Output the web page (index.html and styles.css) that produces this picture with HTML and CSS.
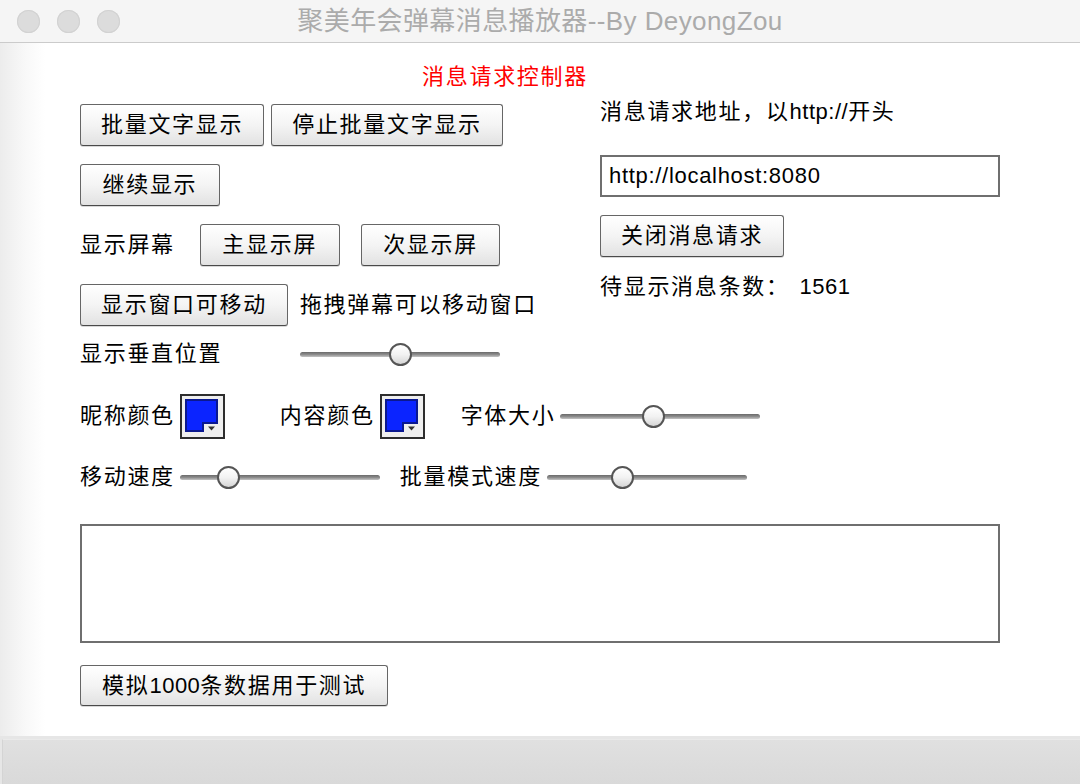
FILE: index.html
```html
<!DOCTYPE html>
<html lang="zh-CN">
<head>
<meta charset="utf-8">
<title>聚美年会弹幕消息播放器--By DeyongZou</title>
<link rel="stylesheet" href="styles.css">
</head>
<body>
<div class="window">
  <header class="titlebar">
    <div class="lights">
      <span class="light"></span>
      <span class="light"></span>
      <span class="light"></span>
    </div>
    <div class="title">聚美年会弹幕消息播放器<span class="title-lat">--By DeyongZou</span></div>
    <div class="title-spacer"></div>
  </header>

  <main class="content">
    <h1 class="heading">消息请求控制器</h1>

    <div class="top">
      <div class="left">
        <div class="row row-pair">
          <button class="btn">批量文字显示</button>
          <button class="btn">停止批量文字显示</button>
        </div>
        <div class="row">
          <button class="btn btn-short">继续显示</button>
        </div>
        <div class="row row-screen">
          <span class="label label-screen">显示屏幕</span>
          <button class="btn btn-short">主显示屏</button>
          <button class="btn btn-short">次显示屏</button>
        </div>
        <div class="row row-move">
          <button class="btn">显示窗口可移动</button>
          <span class="label">拖拽弹幕可以移动窗口</span>
        </div>
        <div class="row row-slim">
          <span class="label label-vpos">显示垂直位置</span>
          <input class="slider" type="range" min="0" max="100" value="50">
        </div>
      </div>

      <div class="right">
        <div class="label url-label">消息请求地址，以<span class="lat">http://</span>开头</div>
        <input class="url" type="text" value="http://localhost:8080">
        <button class="btn btn-close">关闭消息请求</button>
        <div class="count">
          <span class="label">待显示消息条数：</span>
          <span class="lat count-num">1561</span>
        </div>
      </div>
    </div>

    <div class="row row-colors">
      <div class="field">
        <span class="label">昵称颜色</span>
        <svg class="picker" viewBox="0 0 45 45" width="45" height="45">
          <rect x="1" y="1" width="43" height="43" fill="#eeeeee" stroke="#2d2d2d" stroke-width="2"/>
          <path d="M6 6 H37 V29 H23 V37 H6 Z" fill="#0b24ff" stroke="#0a1890" stroke-width="2"/>
          <path d="M28 32.5 H35 L31.5 36.5 Z" fill="#333"/>
        </svg>
      </div>
      <div class="field field-content">
        <span class="label">内容颜色</span>
        <svg class="picker" viewBox="0 0 45 45" width="45" height="45">
          <rect x="1" y="1" width="43" height="43" fill="#eeeeee" stroke="#2d2d2d" stroke-width="2"/>
          <path d="M6 6 H37 V29 H23 V37 H6 Z" fill="#0b24ff" stroke="#0a1890" stroke-width="2"/>
          <path d="M28 32.5 H35 L31.5 36.5 Z" fill="#333"/>
        </svg>
      </div>
      <div class="field field-size">
        <span class="label">字体大小</span>
        <input class="slider" type="range" min="0" max="100" value="46">
      </div>
    </div>

    <div class="row row-speed">
      <div class="field">
        <span class="label">移动速度</span>
        <input class="slider" type="range" min="0" max="100" value="21">
      </div>
      <div class="field field-batch">
        <span class="label">批量模式速度</span>
        <input class="slider" type="range" min="0" max="100" value="36">
      </div>
    </div>

    <textarea class="log"></textarea>

    <button class="btn btn-wide">模拟<span class="lat">1000</span>条数据用于测试</button>
  </main>

  <footer class="statusbar"><div class="statusbar-inner"></div></footer>
</div>
</body>
</html>
```

FILE: styles.css
```css
* {
  box-sizing: border-box;
}

html, body {
  margin: 0;
  padding: 0;
  background: #ffffff;
}

body {
  font-family: "Liberation Sans", "Noto Sans CJK SC", sans-serif;
  font-size: 22px;
  color: #000;
}

.window {
  width: 1080px;
  height: 784px;
  display: flex;
  flex-direction: column;
  overflow: hidden;
}

/* ---------- title bar ---------- */
.titlebar {
  flex: 0 0 43px;
  display: grid;
  grid-template-columns: 1fr auto 1fr;
  align-items: center;
  background: #f5f5f5;
  border-bottom: 1px solid #cbcbcb;
}

.lights {
  display: flex;
  gap: 17px;
  padding-left: 17px;
  padding-top: 1px;
}

.light {
  width: 23px;
  height: 23px;
  border-radius: 50%;
  background: #dcdcdc;
  box-shadow: inset 0 0 0 1px #d2d2d2;
}

.title {
  font-size: 26px;
  line-height: 30px;
  color: #ababab;
  letter-spacing: 0.4px;
  white-space: nowrap;
}

/* ---------- content ---------- */
.content {
  flex: 1;
  padding: 20px 80px 0;
  background: linear-gradient(to right, #ececec 0, #f8f8f8 25px, #ffffff 45px);
  letter-spacing: 1.7px;
}

.heading {
  margin: 0 0 7px;
  font-size: 22px;
  font-weight: normal;
  line-height: 28px;
  text-align: center;
  color: #ff0000;
  padding-right: 70px;
}

.lat {
  letter-spacing: 0.5px;
}

.label {
  line-height: 28px;
  white-space: nowrap;
}

.top {
  display: flex;
}

.left {
  width: 520px;
  padding-top: 6px;
  display: flex;
  flex-direction: column;
  gap: 18px;
}

.row {
  display: flex;
  align-items: center;
  height: 42px;
}

.row-pair {
  gap: 7px;
}

.row-screen {
  gap: 21px;
}

.label-screen {
  margin-right: 4px;
}

.row-move {
  gap: 12px;
}

.row-slim {
  height: 28px;
  margin-top: -4px;
}

.label-vpos {
  width: 220px;
}

/* ---------- buttons ---------- */
.btn {
  font: inherit;
  letter-spacing: 1.7px;
  color: #000;
  height: 42px;
  padding: 0 20px;
  border: 1px solid #666;
  border-bottom-color: #4a4a4a;
  border-radius: 3px;
  background: linear-gradient(#ffffff 0%, #f4f4f4 50%, #e2e2e2 100%);
  box-shadow: 0 1px 0 #d8d8d8;
  white-space: nowrap;
  line-height: 28px;
}

.btn-short {
  padding: 0 21.5px;
}

.btn-wide {
  height: 41px;
  margin-top: 22px;
  padding: 0 21px;
}

/* ---------- right column ---------- */
.right {
  width: 400px;
  display: flex;
  flex-direction: column;
  align-items: flex-start;
}

.url-label {
  height: 28px;
}

.url {
  margin-top: 29px;
  width: 400px;
  height: 42px;
  border: 2px solid #6f6f6f;
  padding: 0 7px;
  font: inherit;
  letter-spacing: 0.7px;
  color: #000;
  background: #fff;
  outline: none;
}

.btn-close {
  margin-top: 18px;
}

.count {
  margin-top: 9px;
  height: 42px;
  display: flex;
  align-items: center;
}

.count-num {
  margin-left: 10px;
}

/* ---------- colour and speed rows ---------- */
.row-colors {
  height: 46px;
  margin-top: 25px;
}

.row-speed {
  margin-top: 17px;
}

.field {
  display: flex;
  align-items: center;
  gap: 5px;
}

.field-content {
  margin-left: 55px;
}

.field-size {
  margin-left: 36px;
}

.field-batch {
  margin-left: 20px;
}

.picker {
  display: block;
  flex: 0 0 45px;
}

/* ---------- sliders ---------- */
.slider {
  -webkit-appearance: none;
  appearance: none;
  width: 200px;
  height: 24px;
  margin: 0;
  padding: 0;
  background: transparent;
}

.slider::-webkit-slider-runnable-track {
  height: 5px;
  border-radius: 3px;
  background: linear-gradient(#6a6a6a 0%, #8c8c8c 50%, #c4c4c4 100%);
}

.slider::-webkit-slider-thumb {
  -webkit-appearance: none;
  appearance: none;
  width: 23px;
  height: 23px;
  margin-top: -9px;
  border-radius: 50%;
  border: 2px solid #555;
  background: linear-gradient(#ffffff 0%, #f2f2f2 50%, #d6d6d6 100%);
}

/* ---------- log area ---------- */
.log {
  display: block;
  margin-top: 26px;
  width: 920px;
  height: 119px;
  border: 2px solid #6f6f6f;
  resize: none;
  background: #fff;
  font: inherit;
}

/* ---------- status bar ---------- */
.statusbar {
  flex: 0 0 48px;
  background: #e6e6e6;
  padding: 3px 0 0 2px;
}

.statusbar-inner {
  height: 100%;
  background: linear-gradient(#e0e0e0, #d9d9d9);
  border-top: 1px solid #eaeaea;
  border-left: 1px solid #d4d4d4;
}
```
